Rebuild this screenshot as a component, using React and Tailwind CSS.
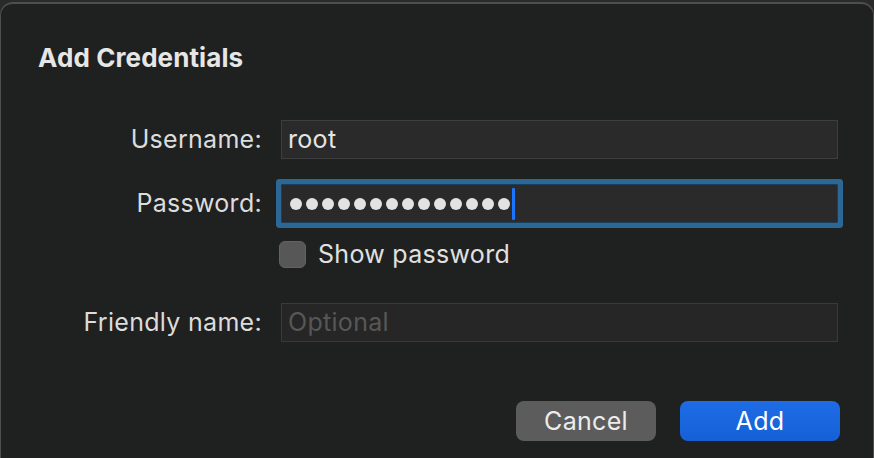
import React from 'react';

const font = { fontFamily: 'Inter, "Noto Sans", sans-serif' };

const Field = ({ label, children }) => (
  <div className="flex items-center">
    <div className="w-[261px] shrink-0 text-right text-[25px] tracking-[0.3px] leading-none text-[#dcdcdc]">{label}</div>
    <div className="ml-[19px] w-[557px]">{children}</div>
  </div>
);

export default function App() {
  return (
    <div className="w-[874px] h-[458px] overflow-hidden bg-[#2a2a2a] pt-[2px]" style={font}>
      <div className="h-[460px] rounded-t-[13px] border-t-2 border-x border-[#4e4e4e] bg-[#1f2020]">
        {/* Title */}
        <div className="pl-[37px] pt-[41px] h-[68px] text-[26px] leading-none font-bold text-[#e6e6e6] tracking-[0.1px]">
          Add Credentials
        </div>

        {/* Form */}
        <div className="mt-[48px] flex flex-col">
          <Field label="Username:">
            <div className="h-[39px] flex items-center px-[6px] bg-[#2a2a2a] border border-[#3e3e3e] text-[25px] tracking-[0.3px] leading-none text-[#e4e4e4]">
              root
            </div>
          </Field>

          <div className="mt-[25px]">
            <Field label="Password:">
              <div className="h-[39px] flex items-center pl-[8px] bg-[#2a2a2a] border border-[#1e3d58] rounded-[1px] ring-[5px] ring-[#2b6896]">
                <div className="flex items-center gap-[4px]">
                  {Array.from({ length: 14 }).map((_, i) => (
                    <div key={i} className="w-[12px] h-[12px] rounded-full bg-[#e2e2e2]" />
                  ))}
                </div>
                <div className="ml-[2px] w-[3px] h-[32px] rounded-[1px] bg-[#1a74ff]" />
              </div>
            </Field>
          </div>

          <div className="mt-[18px] ml-[278px] flex items-center">
            <div className="w-[27px] h-[27px] rounded-[6px] bg-[#575757] border border-[#626262]" />
            <span className="ml-[12px] text-[25px] tracking-[0.3px] leading-none text-[#e0e0e0]">Show password</span>
          </div>

          <div className="mt-[35px]">
            <Field label="Friendly name:">
              <div className="h-[39px] flex items-center px-[6px] bg-[#262626] border border-[#393939] text-[25px] tracking-[0.3px] leading-none text-[#575757]">
                Optional
              </div>
            </Field>
          </div>
        </div>

        {/* Buttons */}
        <div className="mt-[59px] flex justify-end pr-[33px] gap-[24px]">
          <button className="w-[140px] h-[40px] rounded-[8px] bg-[#5c5c5c] text-[25px] tracking-[0.3px] leading-none text-[#ececec]">
            Cancel
          </button>
          <button className="w-[160px] h-[40px] rounded-[8px] bg-gradient-to-b from-[#1e6ce6] to-[#1560d6] text-[25px] tracking-[0.3px] leading-none text-white">
            Add
          </button>
        </div>
      </div>
    </div>
  );
}
